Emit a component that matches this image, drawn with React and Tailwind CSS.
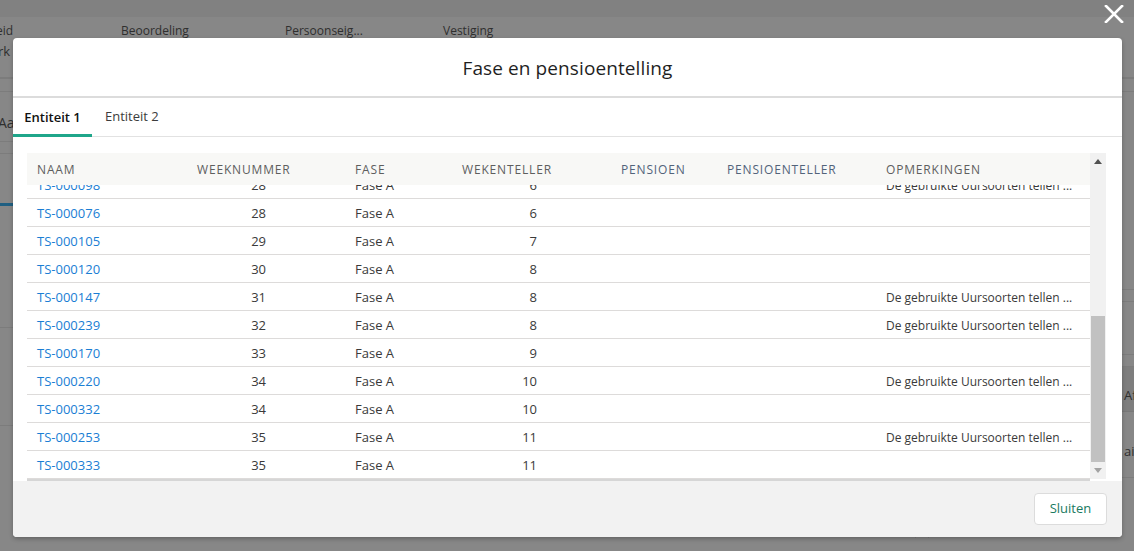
import React from "react";

const rows = [
  { n: "TS-000098", w: 28, f: "Fase A", k: 6, o: true },
  { n: "TS-000076", w: 28, f: "Fase A", k: 6, o: false },
  { n: "TS-000105", w: 29, f: "Fase A", k: 7, o: false },
  { n: "TS-000120", w: 30, f: "Fase A", k: 8, o: false },
  { n: "TS-000147", w: 31, f: "Fase A", k: 8, o: true },
  { n: "TS-000239", w: 32, f: "Fase A", k: 8, o: true },
  { n: "TS-000170", w: 33, f: "Fase A", k: 9, o: false },
  { n: "TS-000220", w: 34, f: "Fase A", k: 10, o: true },
  { n: "TS-000332", w: 34, f: "Fase A", k: 10, o: false },
  { n: "TS-000253", w: 35, f: "Fase A", k: 11, o: true },
  { n: "TS-000333", w: 35, f: "Fase A", k: 11, o: false },
];

const grid = "grid grid-cols-[160px_158px_107px_159px_106px_159px_214px]";

function Background() {
  return (
    <div className="flex flex-col text-[12px] text-[#2f2f2f]">
      <div className="h-[17px] bg-[#818181]" />
      <div className="h-[26px] grid grid-cols-[121px_164px_158px_auto] items-center pt-[2px]">
        <span className="-ml-[4px]">eid</span>
        <span>Beoordeling</span>
        <span>Persoonseig...</span>
        <span>Vestiging</span>
      </div>
      <div className="h-[18px] flex items-center text-[13px]">
        <span className="-ml-[2px]">rk</span>
      </div>
      <div className="h-[18px] border-b-[2px] border-[#7c7c7c]" />
      <div className="h-[13px] border-b border-[#7c7c7c]" />
      <div className="h-[50px] flex justify-between">
        <div className="w-[13px] border-b border-[#7c7c7c] flex items-end pb-[8px] text-[14px]">
          <span className="-ml-[2px]">Aa</span>
        </div>
      </div>
      <div className="h-[12px] flex">
        <div className="w-[13px] border-b border-[#7c7c7c]" />
      </div>
      <div className="h-[52px] flex">
        <div className="w-[13px] border-b-[3px] border-[#1f5f82]" />
      </div>
      <div className="h-[84px] flex justify-end">
        <div className="w-[12px] border-b border-[#7c7c7c]" />
      </div>
      <div className="h-[12px] flex justify-end">
        <div className="w-[12px] border-b border-[#7c7c7c]" />
      </div>
      <div className="h-[26px] flex justify-between">
        <div className="w-[13px] border-b border-[#7c7c7c]" />
      </div>
      <div className="h-[27px] flex justify-end">
        <div className="w-[12px] border-b border-[#7c7c7c]" />
      </div>
      <div className="h-[12px] flex justify-end">
        <div className="w-[12px] border-b border-[#7c7c7c]" />
      </div>
      <div className="h-[45px] flex justify-between">
        <div className="w-[13px]" />
        <div className="w-[12px] bg-[#7e7e7e] border-b border-[#787878] flex items-end pb-[6px] text-[13px]">
          <span className="ml-[2px]">Af</span>
        </div>
      </div>
      <div className="h-[14px] flex">
        <div className="w-[13px] border-b border-[#7c7c7c]" />
      </div>
      <div className="h-[52px] flex justify-end">
        <div className="w-[12px] border-b border-[#7c7c7c] flex items-center text-[13px]">
          <span className="ml-[2px]">ai</span>
        </div>
      </div>
      <div className="h-[60px] flex justify-end">
        <div className="w-[240px] mr-[-8px] flex">
          <div className="w-[14px] border-r border-[#7a7a7a]" />
          <div className="w-[13px] border-r border-[#7a7a7a]" />
        </div>
      </div>
    </div>
  );
}

function Row({ r }) {
  return (
    <div className={`${grid} h-[28px] pt-[2px] border-b border-[#dddbda] items-center text-[13px] text-[#3a3a3a]`}>
      <div className="pl-[10px] text-[#1a7ed4]">{r.n}</div>
      <div className="text-right pr-[79px]">{r.w}</div>
      <div className="pl-[10px]">{r.f}</div>
      <div className="text-right pr-[74px]">{r.k}</div>
      <div />
      <div />
      <div className="pl-[10px] whitespace-nowrap overflow-hidden text-[12px]">
        {r.o ? "De gebruikte Uursoorten tellen ..." : ""}
      </div>
    </div>
  );
}

export default function App() {
  return (
    <div className="relative w-[1134px] h-[551px] overflow-hidden bg-[#878787] font-['Open_Sans',_'Noto_Sans',_sans-serif]">
      <Background />
      <div className="absolute inset-0">
        <button className="absolute top-[4px] right-[9px] w-[22px] h-[20px] flex items-center justify-center">
          <svg width="20" height="18" viewBox="0 0 20 18">
            <path d="M2 1 L18 17 M18 1 L2 17" stroke="#ffffff" strokeWidth="2.6" strokeLinecap="square" />
          </svg>
        </button>
        <div className="mt-[38px] ml-[13px] w-[1109px] h-[499px] bg-white rounded-[4px] shadow-[0_2px_4px_rgba(0,0,0,0.25)] flex flex-col overflow-hidden">
          <div className="h-[60px] pt-[3px] flex items-center justify-center text-[19px] text-[#1f1f1f] border-b-[2px] border-[#dcdcdc] shrink-0">
            <span className="tracking-[0.1px]">Fase en pensioentelling</span>
          </div>
          <div className="h-[39px] flex border-b border-[#e2e2e2] shrink-0 text-[13px]">
            <div className="w-[79px] flex items-center justify-center font-semibold text-[#111] border-b-[3px] border-[#1fa68a] pt-[3px] -mb-px">
              Entiteit 1
            </div>
            <div className="px-[13px] flex items-center text-[#3c3c3c]">Entiteit 2</div>
          </div>
          <div className="h-[16px] shrink-0" />
          <div className="flex pl-[14px] pr-[16px] shrink-0">
            <div className="w-[1063px] flex flex-col">
              <div className={`${grid} h-[32px] pt-[1px] items-center bg-[#f8f8f6] text-[12px] tracking-[0.07em] text-[#5e5e5e] relative z-10`}>
                <div className="pl-[10px]">NAAM</div>
                <div className="pl-[10px]">WEEKNUMMER</div>
                <div className="pl-[10px]">FASE</div>
                <div className="pl-[10px]">WEKENTELLER</div>
                <div className="pl-[10px] text-[#52637a]">PENSIOEN</div>
                <div className="pl-[10px] text-[#52637a]">PENSIOENTELLER</div>
                <div className="pl-[10px]">OPMERKINGEN</div>
              </div>
              <div className="h-[294px] overflow-hidden">
                <div className="-mt-[14px]">
                  {rows.map((r) => (
                    <Row key={r.n} r={r} />
                  ))}
                </div>
              </div>
            </div>
            <div className="w-[16px] h-[326px] bg-[#f1f1f1] flex flex-col items-center">
              <div className="h-[16px] flex items-center justify-center">
                <svg width="8" height="5" viewBox="0 0 8 5"><path d="M0 5 L4 0 L8 5 Z" fill="#505050" /></svg>
              </div>
              <div className="h-[147px]" />
              <div className="w-[14px] h-[146px] bg-[#c1c1c1]" />
              <div className="h-[17px] flex items-center justify-center">
                <svg width="8" height="5" viewBox="0 0 8 5"><path d="M0 0 L4 5 L8 0 Z" fill="#a3a3a3" /></svg>
              </div>
            </div>
          </div>
          <div className="flex pl-[14px] shrink-0">
            <div className="w-[1063px] h-[2px] bg-[#d6d6d6]" />
          </div>
          <div className="flex-1 bg-[#f2f2f2] flex items-center justify-end pr-[15px]">
            <button className="h-[32px] w-[73px] bg-white border border-[#dcdcdc] rounded-[4px] text-[13px] text-[#1a7a5f]">
              Sluiten
            </button>
          </div>
        </div>
      </div>
    </div>
  );
}
